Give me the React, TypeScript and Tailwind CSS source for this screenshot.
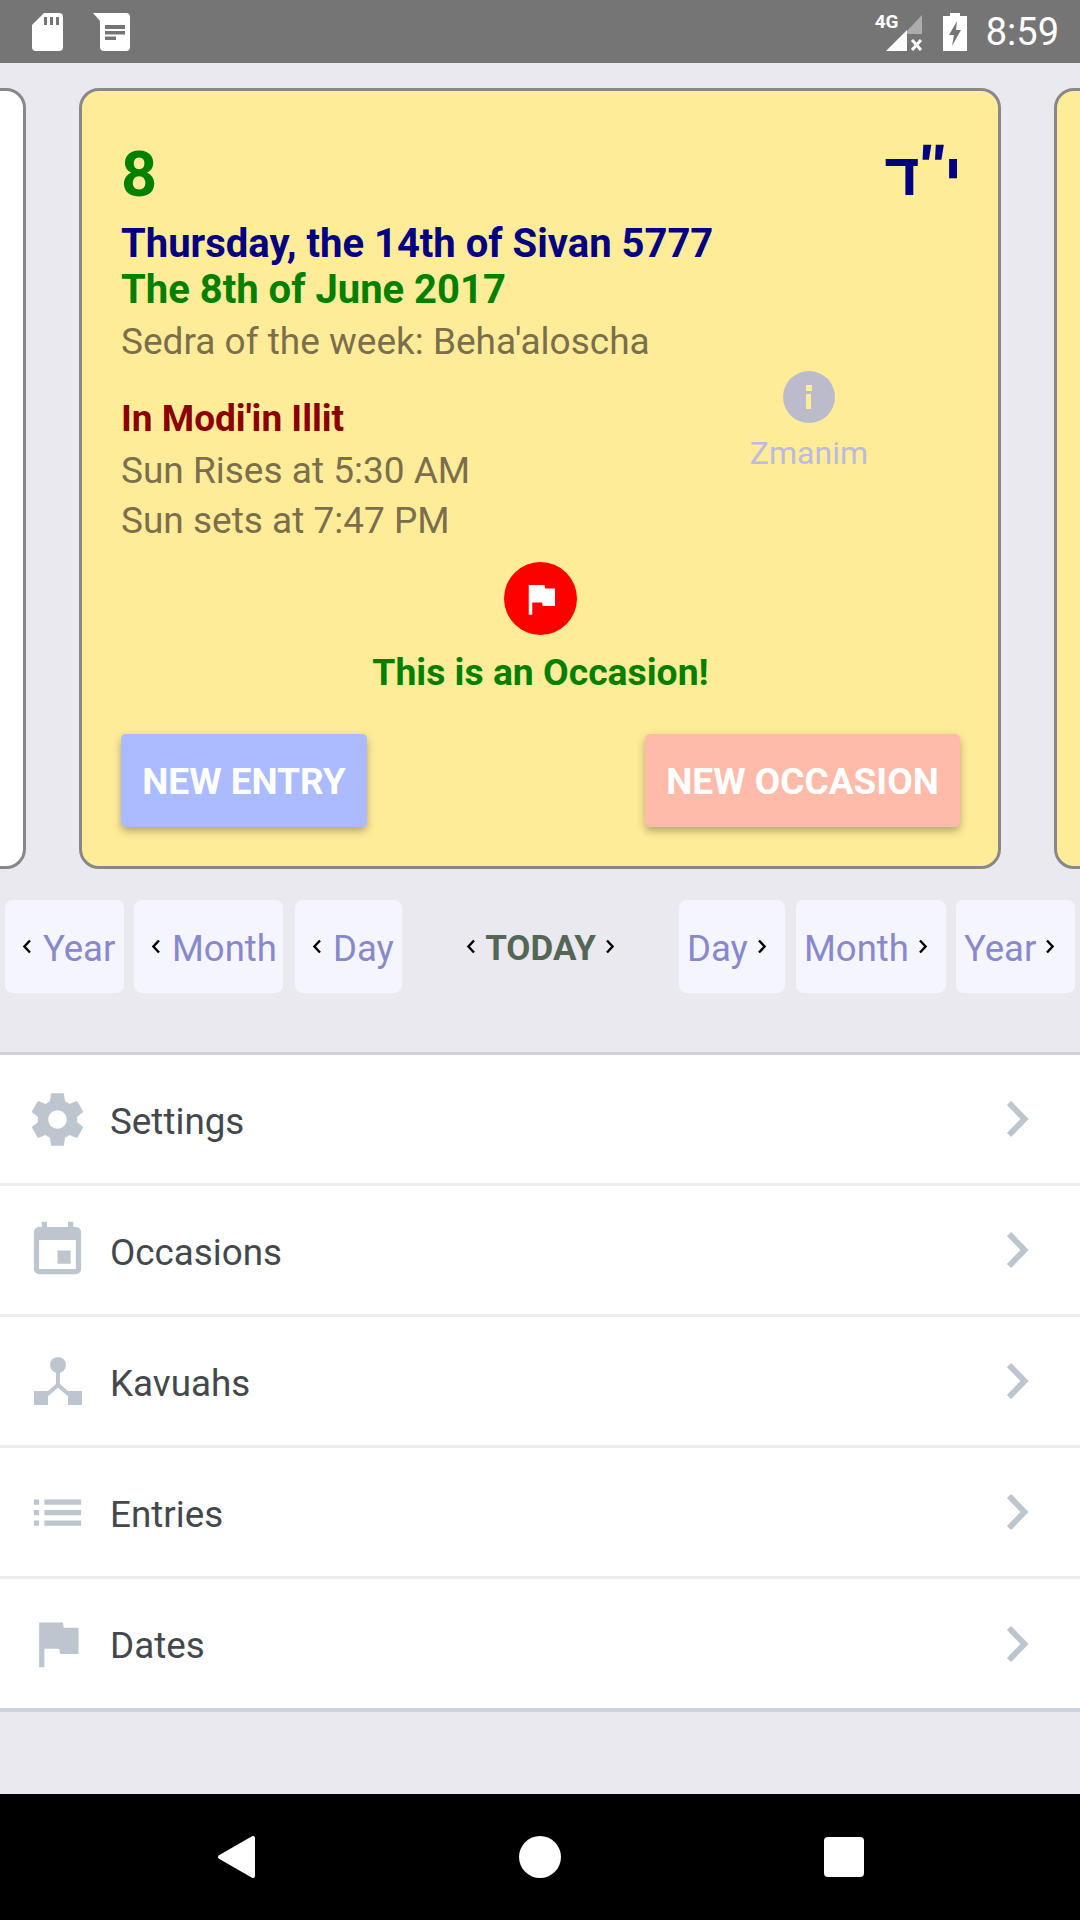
import React from "react";

const Chev = ({ dir }: { dir: "l" | "r" }) => (
  <svg width="10" height="15" viewBox="0 0 10 15" className="shrink-0">
    <path d={dir === "l" ? "M8 1.5 L2.4 7.5 L8 13.5" : "M2 1.5 L7.6 7.5 L2 13.5"} fill="none" stroke="#000" strokeWidth="2.4" />
  </svg>
);

const NavBtn = ({ label, dir, w }: { label: string; dir: "l" | "r"; w: string }) => (
  <div className={`${w} h-[93px] rounded-[8px] bg-[#f5f5fd] flex items-center text-[36.5px] text-[#8888cc] ${dir === "l" ? "pl-[17px] gap-[11px]" : "pl-[8px] gap-[9px]"}`}>
    {dir === "l" && <Chev dir="l" />}
    <span className="pt-[6px]">{label}</span>
    {dir === "r" && <Chev dir="r" />}
  </div>
);

const GearIcon = () => (
  <svg width="63" height="63" viewBox="0 0 24 24" fill="#bdc6cf">
    <path d="M19.43 12.98c.04-.32.07-.64.07-.98s-.03-.66-.07-.98l2.11-1.65c.19-.15.24-.42.12-.64l-2-3.46c-.12-.22-.39-.3-.61-.22l-2.49 1c-.52-.4-1.08-.73-1.69-.98l-.38-2.65C14.46 2.18 14.25 2 14 2h-4c-.25 0-.46.18-.49.42l-.38 2.65c-.61.25-1.17.59-1.69.98l-2.49-1c-.23-.09-.49 0-.61.22l-2 3.46c-.13.22-.07.49.12.64l2.11 1.65c-.04.32-.07.65-.07.98s.03.66.07.98l-2.11 1.65c-.19.15-.24.42-.12.64l2 3.46c.12.22.39.3.61.22l2.49-1c.52.4 1.08.73 1.69.98l.38 2.65c.03.24.24.42.49.42h4c.25 0 .46-.18.49-.42l.38-2.65c.61-.25 1.17-.59 1.69-.98l2.49 1c.23.09.49 0 .61-.22l2-3.46c.12-.22.07-.49-.12-.64l-2.11-1.65zM12 15.5c-1.93 0-3.5-1.57-3.5-3.5s1.57-3.5 3.5-3.5 3.5 1.57 3.5 3.5-1.57 3.5-3.5 3.5z" />
  </svg>
);
const CalIcon = () => (
  <svg width="63" height="63" viewBox="0 0 24 24" fill="#bdc6cf">
    <path d="M17 12h-5v5h5v-5zM16 1v2H8V1H6v2H5c-1.11 0-1.99.9-1.99 2L3 19c0 1.1.89 2 2 2h14c1.1 0 2-.9 2-2V5c0-1.1-.9-2-2-2h-1V1h-2zm3 18H5V8h14v11z" />
  </svg>
);
const TreeIcon = () => (
  <svg width="63" height="63" viewBox="0 0 63 63" fill="#bdc6cf">
    <path d="M8 41h14v14H8zM42 41h14v14H42z" />
    <circle cx="32" cy="15" r="8" />
    <path d="M32 18V35M17 48L32 35L47 48" fill="none" stroke="#bdc6cf" strokeWidth="4" />
  </svg>
);
const ListIcon = () => (
  <svg width="63" height="63" viewBox="0 0 24 24" fill="#bdc6cf">
    <path d="M3 13h2v-2H3v2zm0 4h2v-2H3v2zm0-8h2V7H3v2zm4 4h14v-2H7v2zm0 4h14v-2H7v2zM7 7v2h14V7H7z" />
  </svg>
);
const FlagIcon = ({ size = 63, fill = "#bdc6cf" }: { size?: number; fill?: string }) => (
  <svg width={size} height={size} viewBox="0 0 24 24" fill={fill}>
    <path d="M14.4 6L14 4H5v17h2v-7h5.6l.4 2h7V6z" />
  </svg>
);

const Row = ({ icon, label, last }: { icon: React.ReactNode; label: string; last?: boolean }) => (
  <div className={`flex items-center pl-[26px] pr-[51px] ${last ? "h-[129px]" : "h-[131px] border-b-[3px] border-[#ededed]"}`}>
    <div className="w-[63px] h-[63px] flex items-center justify-center">{icon}</div>
    <span className="ml-[21px] flex-1 pt-[5px] text-[36.8px] text-[#43484d]">{label}</span>
    <svg width="24" height="38" viewBox="0 0 24 38">
      <path d="M4 3 L19.5 19 L4 35" fill="none" stroke="#bdc6cf" strokeWidth="6" />
    </svg>
  </div>
);

const Card = ({ bg }: { bg: string }) => (
  <div className={`w-[922px] h-[781px] shrink-0 rounded-[20px] border-[3px] border-[#888888] ${bg}`} />
);

export default function App() {
  return (
    <div className="w-[1080px] h-[1920px] flex flex-col overflow-hidden bg-[#e9e9ef] font-['Roboto',sans-serif]">
      <div className="h-[63px] shrink-0 bg-[#757575] flex items-center justify-between pl-[32px] pr-[21px]">
        <div className="flex items-center gap-[30px]">
          <svg width="31" height="38" viewBox="0 0 31 38">
            <path d="M12 0H27a4 4 0 0 1 4 4V34a4 4 0 0 1-4 4H4a4 4 0 0 1-4-4V12z" fill="#fff" />
            <path d="M12 4h3v8h-3zM18 4h3v8h-3zM24 4h3v8h-3z" fill="#757575" />
          </svg>
          <svg width="38" height="38" viewBox="0 0 38 38">
            <path d="M0 0H33a4 4 0 0 1 4 4V34a4 4 0 0 1-4 4H11a4 4 0 0 1-4-4V8z" fill="#fff" />
            <path d="M12 12h20v4H12zM12 18h20v3.5H12zM12 23.5h11V27H12z" fill="#757575" />
          </svg>
        </div>
        <div className="flex items-center">
          <div className="relative w-[46px] h-[38px] mr-[12px]">
            <span className="absolute left-[-10px] top-[-1px] text-[19px] font-bold text-white leading-[20px]">4G</span>
            <svg width="38" height="38" viewBox="0 0 38 38" className="absolute left-0 top-0">
              <path d="M22 18 L37 2 V21 H22z" fill="#fff" opacity="0.4" />
              <path d="M1 38 L22 17 V38z" fill="#fff" />
              <path d="M27 27 L36 37 M36 27 L27 37" stroke="#fff" strokeWidth="3" />
            </svg>
          </div>
          <svg width="24" height="38" viewBox="0 0 24 38" className="mr-[19px]">
            <path d="M7 0H17V3H24V38H0V3H7z" fill="#fff" />
            <path d="M14 8 L6 22 H11 L9 33 L18 17 H13z" fill="#757575" />
          </svg>
          <span className="text-[38px] text-white leading-none">8:59</span>
        </div>
      </div>

      <div className="mt-[25px] h-[781px] shrink-0 flex justify-center gap-[53px] overflow-hidden">
        <Card bg="bg-white" />
        <div className="w-[922px] h-[781px] shrink-0 rounded-[20px] border-[3px] border-[#888888] bg-[#ffec99] pl-[39px] pr-[38px] pt-[46px] flex flex-col">
          <div className="flex justify-between items-start h-[72px]">
            <span className="text-[63px] leading-[76px] font-bold text-[#008000]">8</span>
            <span dir="rtl" className="text-[60px] leading-[76px] font-bold text-[#000080] tracking-[-2px] font-['Liberation_Sans',sans-serif]">
              י<span className="relative -top-[9px] inline-block -skew-x-6">"</span>ד
            </span>
          </div>
          <div className="mt-[12px] text-[40px] leading-[46px] font-bold text-[#000080]">Thursday, the 14th of Sivan 5777</div>
          <div className="text-[40px] leading-[46px] font-bold text-[#008000]">The 8th of June 2017</div>
          <div className="mt-[6px] text-[37px] leading-[46px] text-[#7a6e4c]">Sedra of the week: Beha'aloscha</div>
          <div className="mt-[31px] flex justify-between">
            <div>
              <div className="text-[37px] leading-[46px] font-bold text-[#8b0000]">In Modi'in Illit</div>
              <div className="mt-[6px] text-[37px] leading-[46px] text-[#7a6e4c]">Sun Rises at 5:30 AM</div>
              <div className="mt-[4px] text-[37px] leading-[46px] text-[#7a6e4c]">Sun sets at 7:47 PM</div>
            </div>
            <div className="mr-[92px] -mt-[25px] flex flex-col items-center">
              <div className="w-[52px] h-[52px] rounded-full bg-[#bbbbcc] flex items-center justify-center">
                <div className="flex flex-col items-center gap-[3px]">
                  <div className="w-[6px] h-[6px] bg-[#ffec99]" />
                  <div className="w-[5px] h-[15px] bg-[#ffec99]" />
                </div>
              </div>
              <div className="mt-[12px] text-[32px] leading-[36px] text-[#bbbbdd]">Zmanim</div>
            </div>
          </div>
          <div className="mt-[18px] flex flex-col items-center">
            <div className="w-[73px] h-[73px] rounded-full bg-[#ff0000] flex items-center justify-center">
              <FlagIcon size={42} fill="#fff" />
            </div>
            <div className="mt-[15px] text-[37.3px] leading-[44px] font-bold text-[#008000]">This is an Occasion!</div>
          </div>
          <div className="mt-[40px] flex justify-between">
            <div className="w-[246px] h-[93px] pt-[3px] rounded-[5px] bg-[#aabbff] text-white text-[37px] font-bold flex items-center justify-center shadow-[0_4px_8px_rgba(0,0,0,0.3)]">NEW ENTRY</div>
            <div className="w-[315px] h-[93px] pt-[3px] rounded-[5px] bg-[#ffbbaa] text-white text-[37px] font-bold flex items-center justify-center shadow-[0_4px_8px_rgba(0,0,0,0.3)]">NEW OCCASION</div>
          </div>
        </div>
        <Card bg="bg-[#ffec99]" />
      </div>

      <div className="mt-[31px] px-[5px] flex items-center">
        <NavBtn label="Year" dir="l" w="w-[119px]" />
        <div className="w-[10px]" />
        <NavBtn label="Month" dir="l" w="w-[149px]" />
        <div className="w-[12px]" />
        <NavBtn label="Day" dir="l" w="w-[107px]" />
        <div className="flex-1 flex items-center justify-center gap-[9px] text-[35px] font-bold text-[#556655]">
          <Chev dir="l" />
          <span className="pt-[5px]">TODAY</span>
          <Chev dir="r" />
        </div>
        <NavBtn label="Day" dir="r" w="w-[106px]" />
        <div className="w-[11px]" />
        <NavBtn label="Month" dir="r" w="w-[150px]" />
        <div className="w-[10px]" />
        <NavBtn label="Year" dir="r" w="w-[119px]" />
      </div>

      <div className="mt-[59px] bg-white border-t-[3px] border-b-[4px] border-[#cbd2d9]">
        <Row icon={<GearIcon />} label="Settings" />
        <Row icon={<CalIcon />} label="Occasions" />
        <Row icon={<TreeIcon />} label="Kavuahs" />
        <Row icon={<ListIcon />} label="Entries" />
        <Row icon={<FlagIcon />} label="Dates" last />
      </div>

      <div className="mt-auto h-[126px] bg-black flex items-center justify-center gap-[263px] pl-[2px]">
        <svg width="40" height="46" viewBox="0 0 40 46" className="-ml-[2px]"><path d="M37 4V42L4 23z" fill="#fff" stroke="#fff" strokeWidth="4" strokeLinejoin="round" /></svg>
        <div className="w-[42px] h-[42px] rounded-full bg-white" />
        <div className="w-[40px] h-[40px] rounded-[4px] bg-white" />
      </div>
    </div>
  );
}
